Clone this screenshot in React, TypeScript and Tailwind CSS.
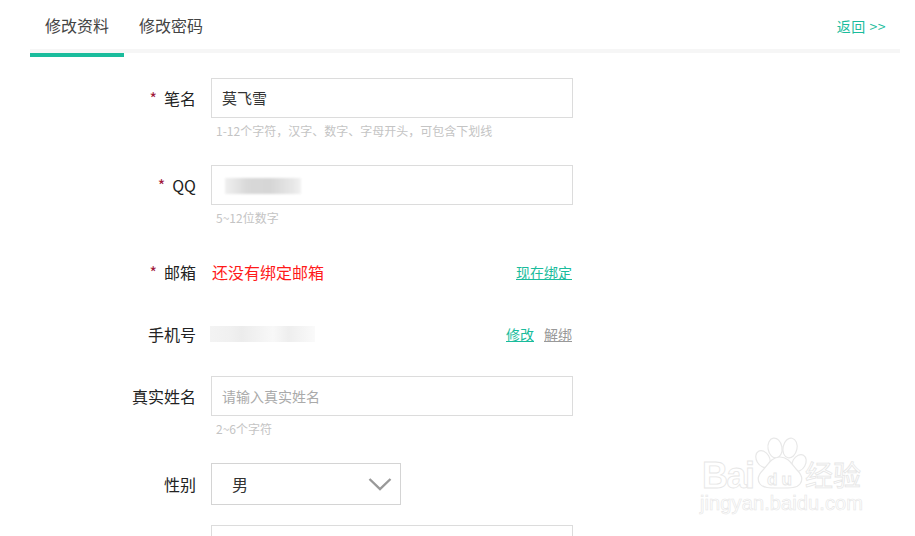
const FONT = "font-['Noto_Sans_CJK_SC','Liberation_Sans',sans-serif]";

function Label({ text, required }: { text: string; required?: boolean }) {
  return (
    <div className="w-[196px] shrink-0 text-right text-base leading-[20px] text-[#222]">
      {required ? <span className="mr-[7px] text-[#a0173a]">*</span> : null}
      {text}
    </div>
  );
}

function Hint({ children }: { children: React.ReactNode }) {
  return <p className="mt-[5px] ml-[216px] text-xs leading-[16px] text-[#c4c4c4]">{children}</p>;
}

function Box({ children }: { children?: React.ReactNode }) {
  return (
    <div className="relative ml-[15px] flex h-10 w-[362px] items-center border border-[#dcdcdc] pl-[10px] text-sm text-[#333]">
      {children}
    </div>
  );
}

function Watermark() {
  return (
    <svg className="absolute left-[680px] top-[430px]" width="235" height="106" viewBox="0 0 235 106" fill="none">
      <g stroke="#e8e8e8" strokeWidth="1.2" fill="#fff">
        <ellipse cx="95" cy="18" rx="7" ry="10" transform="rotate(-10 95 18)" />
        <ellipse cx="110" cy="18" rx="7" ry="10" transform="rotate(12 110 18)" />
        <ellipse cx="83" cy="29" rx="6.5" ry="9" transform="rotate(-30 83 29)" />
        <ellipse cx="119" cy="33" rx="6.5" ry="9" transform="rotate(30 119 33)" />
        <path d="M100 27c9 0 12 8 17 13 5 5 6 10 3 14-3 4-9 4-20 4s-17 0-20-4c-3-4-2-9 3-14 5-5 8-13 17-13z" />
      </g>
      <g style={{ fontFamily: "'Liberation Sans', sans-serif" }} stroke="#e6e6e6" strokeWidth="0.8" fill="#fff">
        <text x="22" y="58" fontSize="36" fontWeight="700" textLength="53">Bai</text>
        <text x="87" y="55" fontSize="17" fontWeight="700" textLength="25">du</text>
        <text x="20" y="80" fontSize="20" strokeWidth="0.6" textLength="163">jingyan.baidu.com</text>
      </g>
      <text x="125" y="56" fontSize="28" stroke="#e6e6e6" strokeWidth="0.8" fill="#fff" style={{ fontFamily: "'Noto Sans CJK SC', sans-serif" }}>经验</text>
    </svg>
  );
}

export default function App() {
  return (
    <div className={`relative h-[536px] w-[915px] overflow-hidden bg-white ${FONT}`}>
      <div className="ml-[30px] flex h-[53px] w-[870px] items-start justify-between border-b-4 border-[#f6f6f6]">
        <div className="flex">
          <div className="relative h-[53px] w-[94px] pt-[14px] text-center text-base leading-[22px] text-[#444]">
            修改资料
            <span className="absolute bottom-[-4px] left-0 h-1 w-full bg-[#1abc9c]" />
          </div>
          <div className="w-[94px] pt-[14px] text-center text-base leading-[22px] text-[#444]">修改密码</div>
        </div>
        <a className="mt-[18px] mr-[14px] text-sm leading-[17px] tracking-[0.5px] text-[#1abc9c]">返回 &gt;&gt;</a>
      </div>

      <div className="pt-[25px]">
        <div className="flex h-10 items-center">
          <Label text="笔名" required />
          <Box>
            <span className="text-[15px]">莫飞雪</span>
          </Box>
        </div>
        <Hint>1-12个字符，汉字、数字、字母开头，可包含下划线</Hint>

        <div className="mt-[26px] flex h-10 items-center">
          <Label text="QQ" required />
          <Box>
            <span className="absolute left-[13px] top-[12px] h-4 w-[76px] bg-[linear-gradient(90deg,#f0f0f0,#d8d8d8_30%,#d6d6d6_60%,#e8e8e8_90%,#f2f2f2)] blur-[1px]" />
          </Box>
        </div>
        <Hint>5~12位数字</Hint>

        <div className="mt-9 flex h-[20px] w-[572px] items-center">
          <Label text="邮箱" required />
          <span className="ml-[16px] text-base leading-[20px] text-[#ff1a1a]">还没有绑定邮箱</span>
          <a className="ml-auto text-sm leading-[18px] text-[#1abc9c] underline">现在绑定</a>
        </div>

        <div className="mt-[42px] flex h-[20px] w-[572px] items-center">
          <Label text="手机号" />
          <span className="ml-[14px] h-4 w-[105px] bg-[linear-gradient(90deg,#f3f3f3,#f0f0f0_20%,#ececec_30%,#f8f8f8_60%,#eeeeee_75%,#fafafa)] blur-[0.5px]" />
          <a className="ml-auto text-sm leading-[18px] text-[#1abc9c] underline">修改</a>
          <a className="ml-[10px] text-sm leading-[18px] text-[#999] underline">解绑</a>
        </div>

        <div className="mt-8 flex h-10 items-center">
          <Label text="真实姓名" />
          <Box>
            <span className="text-[#aaa]">请输入真实姓名</span>
          </Box>
        </div>
        <Hint>2~6个字符</Hint>

        <div className="mt-[26px] flex h-[42px] items-center">
          <Label text="性别" />
          <div className="ml-[15px] flex h-[42px] w-[190px] items-center justify-between border border-[#d4d4d4] pl-5 pr-[8px] text-base text-[#333]">
            男
            <svg width="24" height="14" viewBox="0 0 24 14" fill="none" stroke="#999" strokeWidth="2.4">
              <path d="M1.5 2 L12 12 L22.5 2" />
            </svg>
          </div>
        </div>

        <div className="mt-5 flex h-10 items-start">
          <div className="w-[196px] shrink-0" />
          <Box />
        </div>
      </div>
      <Watermark />
    </div>
  );
}
